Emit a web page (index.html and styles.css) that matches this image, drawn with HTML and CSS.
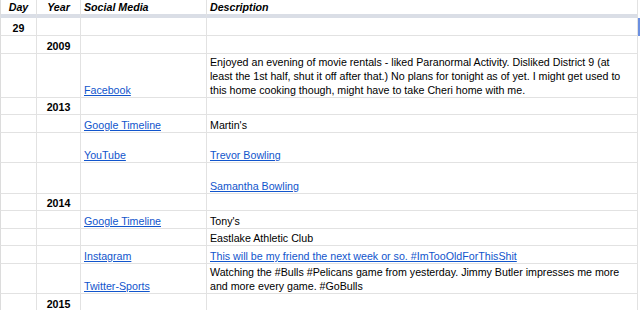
FILE: index.html
```html
<!DOCTYPE html>
<html>
<head>
<meta charset="utf-8">
<link rel="stylesheet" href="styles.css">
</head>
<body>
<table class="sheet">
  <thead>
    <tr class="head">
      <th class="c-day">Day</th>
      <th class="c-year">Year</th>
      <th class="c-media">Social Media</th>
      <th class="c-desc">Description</th>
    </tr>
  </thead>
  <tbody>
    <tr class="r18"><td class="num">29</td><td></td><td></td><td class="active"></td></tr>
    <tr class="r18"><td></td><td class="num">2009</td><td></td><td></td></tr>
    <tr class="r44"><td></td><td></td><td><a href="#">Facebook</a></td><td>Enjoyed an evening of movie rentals - liked Paranormal Activity. Disliked District 9 (at least the 1st half, shut it off after that.) No plans for tonight as of yet. I might get used to this home cooking though, might have to take Cheri home with me.</td></tr>
    <tr class="r17"><td></td><td class="num">2013</td><td></td><td></td></tr>
    <tr class="r18"><td></td><td></td><td><a href="#">Google Timeline</a></td><td>Martin's</td></tr>
    <tr class="r30"><td></td><td></td><td><a href="#">YouTube</a></td><td><a href="#">Trevor Bowling</a></td></tr>
    <tr class="r31"><td></td><td></td><td></td><td><a href="#">Samantha Bowling</a></td></tr>
    <tr class="r17"><td></td><td class="num">2014</td><td></td><td></td></tr>
    <tr class="r18"><td></td><td></td><td><a href="#">Google Timeline</a></td><td>Tony's</td></tr>
    <tr class="r17"><td></td><td></td><td></td><td>Eastlake Athletic Club</td></tr>
    <tr class="r18"><td></td><td></td><td><a href="#">Instagram</a></td><td><a href="#">This will be my friend the next week or so. #ImTooOldForThisShit</a></td></tr>
    <tr class="r30"><td></td><td></td><td><a href="#">Twitter-Sports</a></td><td>Watching the #Bulls #Pelicans game from yesterday. Jimmy Butler impresses me more and more every game. #GoBulls</td></tr>
    <tr class="r18"><td></td><td class="num">2015</td><td></td><td></td></tr>
  </tbody>
</table>
</body>
</html>
```

FILE: styles.css
```css
html, body {
  margin: 0;
  padding: 0;
  background: #ffffff;
}

.sheet {
  border-collapse: separate;
  border-spacing: 0;
  table-layout: fixed;
  width: 638px;
  font-family: "Liberation Sans", Arial, sans-serif;
  font-size: 10.67px;
  line-height: 14px;
  color: #000000;
}

.sheet th,
.sheet td {
  box-sizing: border-box;
  padding: 0 3px;
  border-right: 1px solid #e2e2e2;
  border-bottom: 1px solid #e2e2e2;
  vertical-align: bottom;
  text-align: left;
  overflow: hidden;
}

.sheet th:first-child,
.sheet td:first-child {
  border-left: 1px solid #dcdcdc;
}

.sheet th {
  font-weight: bold;
  font-style: italic;
  border-bottom: 4px solid #dadee6;
  height: 18px;
}

.c-day { width: 37px; }
.c-year { width: 44px; }
.c-media { width: 126px; }
.c-desc { width: 431px; }

.sheet th.c-day,
.sheet th.c-year,
.sheet td.num {
  text-align: center;
}

.sheet td.num {
  font-weight: bold;
}

.sheet td.active {
  box-shadow: 2px 0 0 #6b8fe0;
}

.r17 { height: 17px; }
.r18 { height: 18px; }
.r30 { height: 30px; }
.r31 { height: 31px; }
.r44 { height: 44px; }

.sheet a {
  color: #1155cc;
  text-decoration: underline;
}
```
